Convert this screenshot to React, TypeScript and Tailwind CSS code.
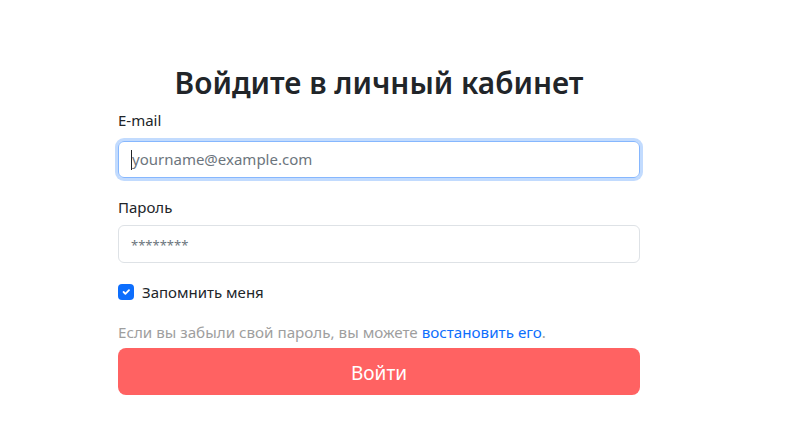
import React from "react";

export default function App() {
  return (
    <div className="min-h-[425px] w-[795px] bg-white" style={{ fontFamily: '"Noto Sans", "Open Sans", sans-serif' }}>
      <div className="ml-[118px] w-[522px] pt-[60px]">
        <h1 className="text-center text-[29.8px] font-semibold leading-[46px] text-[#212529]">Войдите в личный кабинет</h1>
        <label className="mt-[2px] block text-[15px] leading-[24px] text-[#212529]">E-mail</label>
        <div className="mt-[9px] rounded-[6px] border border-[#86b7fe] shadow-[0_0_0_3px_rgba(13,110,253,0.25)] h-[37px] flex items-center px-[12px]">
          <span className="h-[20px] w-px bg-[#212529]" />
          <span className="text-[15px] text-[#6c757d]">yourname@example.com</span>
        </div>
        <label className="mt-[17px] block text-[15px] leading-[24px] text-[#212529]">Пароль</label>
        <div className="mt-[6px] rounded-[6px] border border-[#dee2e6] h-[38px] flex items-center px-[12px]">
          <span className="pt-[3px] text-[13px] tracking-[0px] text-[#6c757d]">********</span>
        </div>
        <div className="mt-[17px] flex items-center gap-[8px]">
          <span className="flex h-[16px] w-[16px] items-center justify-center rounded-[4px] bg-[#0d6efd]">
            <svg width="12" height="12" viewBox="0 0 20 20" fill="none">
              <path d="M6 10l3 3 6-6" stroke="#fff" strokeWidth="3" strokeLinecap="round" strokeLinejoin="round" />
            </svg>
          </span>
          <span className="text-[15px] leading-[24px] text-[#212529]">Запомнить меня</span>
        </div>
        <p className="mt-[16px] text-[15.2px] leading-[24px] text-[#9e9e9e]">
          Если вы забыли свой пароль, вы можете <a className="text-[#0d6efd]">востановить его</a>.
        </p>
        <button className="mt-[4px] h-[47px] w-full rounded-[8px] bg-[#ff6262] pt-[3px] text-[19px] text-white">Войти</button>
      </div>
    </div>
  );
}
